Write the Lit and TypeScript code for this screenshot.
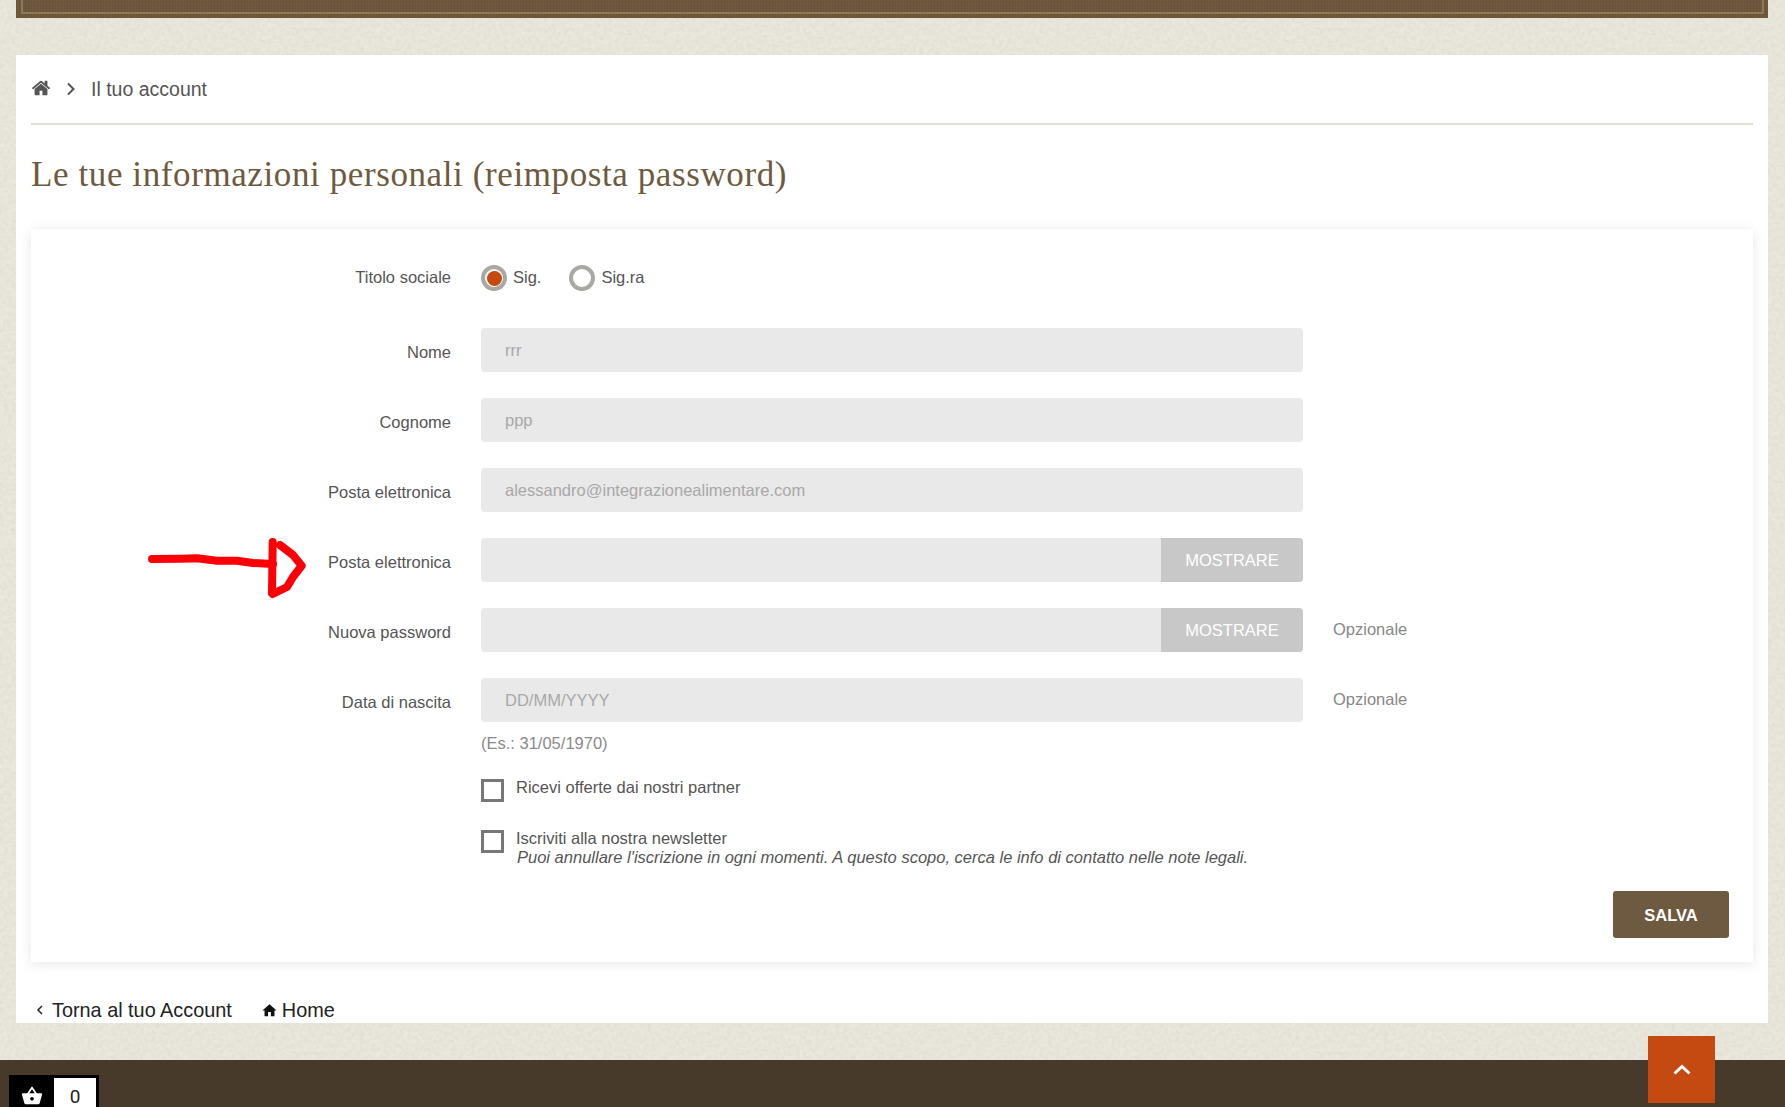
import { LitElement, html, css, svg } from "lit";
import { customElement } from "lit/decorators.js";

const homeFa = svg`<path d="M1472 992v480q0 26-19 45t-45 19h-384v-384h-256v384h-384q-26 0-45-19t-19-45v-480q0-1 .5-3t.5-3l575-474 575 474q1 2 1 6zm223-69l-62 74q-8 9-21 11h-3q-13 0-21-7l-692-577-692 577q-12 8-24 7-13-2-21-11l-62-74q-8-10-7-23.5t11-21.5l719-599q32-26 76-26t76 26l244 204v-195q0-14 9-23t23-9h192q14 0 23 9t9 23v408l219 182q10 8 11 21.5t-7 23.5z"/>`;

type Field = {
  label: string;
  value?: string;
  placeholder?: string;
  show?: boolean;
  hint?: string;
};

const fields: Field[] = [
  { label: "Nome", value: "rrr" },
  { label: "Cognome", value: "ppp" },
  { label: "Posta elettronica", value: "alessandro@integrazionealimentare.com" },
  { label: "Posta elettronica", show: true },
  { label: "Nuova password", show: true, hint: "Opzionale" },
  { label: "Data di nascita", placeholder: "DD/MM/YYYY", hint: "Opzionale" },
];

@customElement("app-root")
export class AppRoot extends LitElement {
  static override styles = css`
    :host {
      display: block;
      position: relative;
      width: 1785px;
      height: 1107px;
      overflow: hidden;
      background: #eae7dd;
      font-family: "Liberation Sans", Arial, sans-serif;
      font-size: 16.5px;
      color: #555;
    }

    .paper {
      position: absolute;
      left: 0;
      top: 0;
      width: 1785px;
      height: 1107px;
    }

    .page {
      position: relative;
      display: flex;
      flex-direction: column;
      height: 100%;
    }

    .top-bar {
      height: 18px;
      margin: 0 17px 37px 16px;
      padding: 0 4px 4px 5px;
      box-sizing: border-box;
      background-color: #6f5a3f;
      background-image: repeating-linear-gradient(90deg, rgba(0, 0, 0, 0.05) 0 1px, transparent 1px 3px),
        repeating-linear-gradient(0deg, rgba(0, 0, 0, 0.03) 0 1px, transparent 1px 3px);
    }

    .top-bar div {
      height: 100%;
      box-sizing: border-box;
      border: 2px solid #8d7958;
      border-top: none;
    }

    .panel {
      height: 968px;
      margin: 0 17px 0 16px;
      padding: 0 15px;
      box-sizing: border-box;
      background: #fff;
      overflow: hidden;
    }

    .crumbs {
      display: flex;
      align-items: center;
      height: 68px;
      border-bottom: 2px solid #e2ddd7;
      font-size: 19.5px;
      color: #555;
    }

    .crumbs span {
      margin-top: 1px;
    }

    .crumbs .home {
      width: 20px;
      height: 20px;
      fill: #555;
      margin-top: -2px;
    }

    .crumbs .sep {
      width: 10px;
      height: 14px;
      margin: 0 15px 0 15px;
      fill: none;
      stroke: #555;
      stroke-width: 2;
    }

    h1 {
      margin: 0;
      height: 104px;
      padding-bottom: 5px;
      box-sizing: border-box;
      display: flex;
      align-items: center;
      font-family: "Liberation Serif", Georgia, serif;
      font-weight: 400;
      font-size: 35px;
      letter-spacing: 0.6px;
      color: #6e5a40;
    }

    .card {
      height: 733px;
      padding-top: 36px;
      box-sizing: border-box;
      background: #fff;
      box-shadow: 0 2px 12px rgba(0, 0, 0, 0.1);
    }

    .row {
      display: grid;
      grid-template-columns: 420px 822px auto;
      column-gap: 30px;
      align-items: center;
      height: 44px;
      margin-bottom: 26px;
    }

    .row.titles {
      height: 26px;
      margin-bottom: 37px;
    }

    .row > label {
      text-align: right;
      padding-top: 5px;
    }

    .row.titles > label {
      padding-top: 0;
      margin-top: -1px;
    }

    .radios {
      display: flex;
      align-items: center;
    }

    .radio {
      display: flex;
      align-items: center;
      justify-content: center;
      width: 26px;
      height: 26px;
      box-sizing: border-box;
      border: 4px solid #aaa8a2;
      border-radius: 50%;
      margin-right: 6px;
    }

    .radio i {
      width: 15px;
      height: 15px;
      border-radius: 50%;
      background: #c44a12;
    }

    .radio-text {
      margin-right: 28px;
      margin-top: -1px;
    }

    .control {
      display: flex;
      height: 44px;
      border-radius: 4px;
      overflow: hidden;
      background: #e9e9e9;
    }

    .control input {
      flex: 1;
      min-width: 0;
      border: none;
      outline: none;
      background: none;
      padding: 0 0 0 24px;
      font: inherit;
      color: #a8a8a8;
      -webkit-text-fill-color: #a8a8a8;
      opacity: 1;
    }

    .control input::placeholder {
      color: #a8a8a8;
      opacity: 1;
    }

    .control button {
      width: 142px;
      padding: 0;
      border: none;
      background: #c8c8c8;
      color: #fff;
      font: inherit;
    }

    .hint {
      color: #888;
      margin-top: -2px;
    }

    .help {
      margin: -15px 0 0 450px;
      height: 20px;
      line-height: 20px;
      color: #8a8a8a;
    }

    .check {
      display: flex;
      margin-left: 450px;
      line-height: 19px;
    }

    .check .box {
      flex: none;
      width: 23px;
      height: 23px;
      box-sizing: border-box;
      border: 3px solid #777;
      margin-right: 12px;
    }

    .check .text {
      margin-top: -1px;
    }

    .check.first {
      margin-top: 26px;
      height: 51px;
    }

    .check em {
      display: block;
      margin-left: 1px;
    }

    .actions {
      display: flex;
      justify-content: flex-end;
      padding-right: 24px;
      margin-top: 24px;
    }

    .save {
      width: 116px;
      height: 47px;
      padding: 2px 0 0;
      border: none;
      border-radius: 3px;
      background: #6e5a40;
      color: #fff;
      font: inherit;
      font-weight: 700;
    }

    .back {
      display: flex;
      align-items: center;
      height: 30px;
      margin-top: 33px;
      font-size: 19.85px;
      color: #222;
    }

    .back svg.chev {
      width: 8px;
      height: 12px;
      margin: 0 8px 0 5px;
      fill: none;
      stroke: #222;
      stroke-width: 1.5;
    }

    .back svg.house {
      width: 17px;
      height: 17px;
      margin: 0 4px 0 29px;
      fill: #111;
    }

    .footer {
      margin-top: 37px;
      height: 47px;
      background: #483a2a;
    }

    .to-top {
      position: absolute;
      left: 1648px;
      top: 1036px;
      width: 67px;
      height: 67px;
      display: flex;
      align-items: center;
      justify-content: center;
      background: #c44a12;
    }

    .to-top svg {
      width: 18px;
      height: 11px;
      fill: none;
      stroke: #fff;
      stroke-width: 3;
    }

    .cart {
      position: absolute;
      left: 9px;
      top: 1075px;
      width: 90px;
      height: 32px;
      box-sizing: border-box;
      padding: 3px 3px 0 0;
      display: flex;
      background: #000;
    }

    .cart .icon {
      flex: 1;
      display: flex;
      justify-content: center;
      padding-top: 7px;
    }

    .cart .icon svg {
      width: 22px;
      height: 22px;
      fill: #fff;
    }

    .cart .count {
      width: 42px;
      text-align: center;
      background: #fff;
      color: #222;
      font-family: Roboto, sans-serif;
      font-size: 19px;
      line-height: 38px;
    }

    .arrow {
      position: absolute;
      left: 0;
      top: 0;
      width: 400px;
      height: 700px;
      pointer-events: none;
      fill: none;
      stroke: #fb0007;
      stroke-width: 8;
      stroke-linecap: round;
      stroke-linejoin: round;
    }
  `;

  renderField(f: Field) {
    return html`<div class="row">
      <label>${f.label}</label>
      <div class="control">
        <input disabled .value=${f.value ?? ""} placeholder=${f.placeholder ?? ""} />
        ${f.show ? html`<button>MOSTRARE</button>` : null}
      </div>
      ${f.hint ? html`<span class="hint">${f.hint}</span>` : null}
    </div>`;
  }

  override render() {
    return html`
      <svg class="paper" xmlns="http://www.w3.org/2000/svg">
        <filter id="grain">
          <feTurbulence type="fractalNoise" baseFrequency="0.25" numOctaves="3" seed="4" />
          <feColorMatrix values="0 0 0 0 0.6  0 0 0 0 0.58  0 0 0 0 0.5  0.4 0.4 0 0 -0.3" />
        </filter>
        <rect width="1785" height="1107" filter="url(#grain)" />
      </svg>

      <div class="page">
        <div class="top-bar"><div></div></div>

        <main class="panel">
          <nav class="crumbs">
            <svg class="home" viewBox="0 0 1792 1792">${homeFa}</svg>
            <svg class="sep" viewBox="0 0 10 14"><path d="M2 1.5 7.5 7 2 12.5" /></svg>
            <span>Il tuo account</span>
          </nav>

          <h1>Le tue informazioni personali (reimposta password)</h1>

          <section class="card">
            <div class="row titles">
              <label>Titolo sociale</label>
              <div class="radios">
                <span class="radio"><i></i></span><span class="radio-text">Sig.</span>
                <span class="radio"></span><span class="radio-text">Sig.ra</span>
              </div>
            </div>

            ${fields.map((f) => this.renderField(f))}

            <div class="help">(Es.: 31/05/1970)</div>

            <div class="check first">
              <span class="box"></span>
              <span class="text">Ricevi offerte dai nostri partner</span>
            </div>
            <div class="check">
              <span class="box"></span>
              <span class="text">
                Iscriviti alla nostra newsletter
                <em>Puoi annullare l'iscrizione in ogni momenti. A questo scopo, cerca le info di contatto nelle note legali.</em>
              </span>
            </div>

            <div class="actions"><button class="save">SALVA</button></div>
          </section>

          <div class="back">
            <svg class="chev" viewBox="0 0 8 12"><path d="M6 2 2 6l4 4" /></svg>
            <span>Torna al tuo Account</span>
            <svg class="house" viewBox="0 0 24 24"><path d="M10 20v-6h4v6h5v-8h3L12 3 2 12h3v8z" /></svg>
            <span>Home</span>
          </div>
        </main>

        <footer class="footer"></footer>
      </div>

      <!-- hand drawn annotation on top of the form -->
      <svg class="arrow" viewBox="0 0 400 700">
        <path d="M152 559 180 558.7 197 558.3 217 560.7 237 560.7 253 563 273 564" />
        <path d="M272.7 542 272 593" />
        <path d="M280 545 293 555 301.7 565.7 293 577 287 587 272.7 594" />
      </svg>

      <a class="to-top">
        <svg viewBox="0 0 18 11"><path d="M1.5 9.5 9 2.5l7.5 7" /></svg>
      </a>

      <div class="cart">
        <div class="icon">
          <svg viewBox="0 0 24 24"><path d="M17.21 9l-4.38-6.56c-.19-.28-.51-.42-.83-.42-.32 0-.64.14-.83.43L6.79 9H2c-.55 0-1 .45-1 1 0 .09.01.18.04.27l2.54 9.27c.23.84 1 1.46 1.92 1.46h13c.92 0 1.69-.62 1.93-1.46l2.54-9.27L23 10c0-.55-.45-1-1-1h-4.79zM9 9l3-4.4L15 9H9zm3 8c-1.1 0-2-.9-2-2s.9-2 2-2 2 .9 2 2-.9 2-2 2z" /></svg>
        </div>
        <div class="count">0</div>
      </div>
    `;
  }
}
